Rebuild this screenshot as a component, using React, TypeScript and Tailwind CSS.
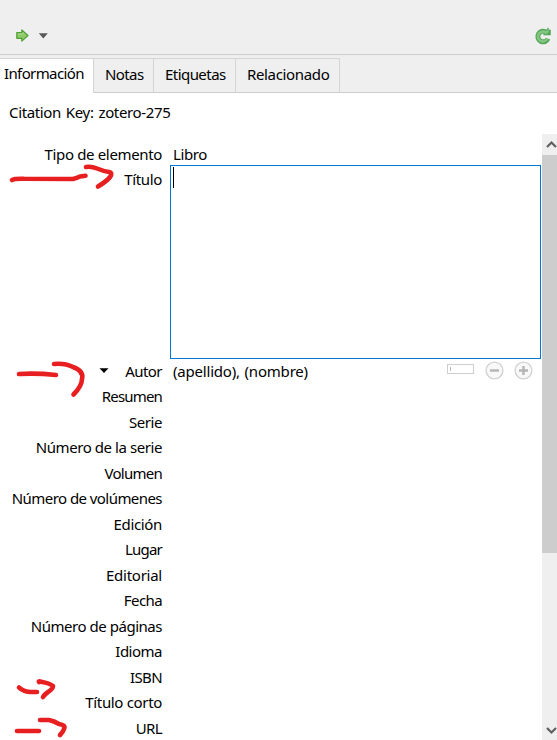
import React from "react";

const FIELDS: [string, string][] = [
  ["Resumen", "tracking-[-0.83px]"],
  ["Serie", "tracking-[-0.45px]"],
  ["Número de la serie", "tracking-[-0.43px]"],
  ["Volumen", "tracking-[-0.73px]"],
  ["Número de volúmenes", "tracking-[-0.56px]"],
  ["Edición", "tracking-[-0.35px]"],
  ["Lugar", "tracking-[-0.8px]"],
  ["Editorial", "tracking-[-0.25px]"],
  ["Fecha", "tracking-[-0.6px]"],
  ["Número de páginas", "tracking-[-0.47px]"],
  ["Idioma", "tracking-[-0.5px]"],
  ["ISBN", "tracking-[-0.6px]"],
  ["Título corto", "tracking-[-0.33px]"],
  ["URL", "tracking-[-0.65px]"],
];

function Toolbar() {
  return (
    <header className="flex h-[55px] shrink-0 items-start justify-between border-b border-[#cdcdcd] pt-[26px]">
      <div className="flex items-start pl-4">
        <svg width="14" height="18" viewBox="0 0 14 18">
          <path d="M.8 6.7h5V3.9l6.2 5.6-6.2 5.6v-2.8h-5z" fill="#8fca68" stroke="#4f9f33" strokeWidth="1.2" strokeLinejoin="round" />
          <path d="M2 8h5V6.6" fill="none" stroke="#b0d69a" />
        </svg>
        <svg width="10" height="6" viewBox="0 0 10 6" className="ml-[8px] mt-[7px]">
          <path d="M.8.2h9L5.3 5.5z" fill="#585858" />
        </svg>
      </div>
      <svg width="18" height="20" viewBox="0 0 18 20" className="mr-[5px]">
        <path d="M14 12.6A5.3 5.3 0 1 1 12.3 6.3" fill="none" stroke="#56a75a" strokeWidth="5" />
        <path d="M9.6 8.9l4.6-7.1v2.4l2.2-.3v5z" fill="#56a75a" stroke="#56a75a" strokeLinejoin="round" strokeWidth=".7" />
        <path d="M13.3 12.5A4.9 4.9 0 1 1 11.9 6.7L14.3 5" fill="none" stroke="#83c681" strokeWidth="2.5" />
      </svg>
    </header>
  );
}

function Tabs() {
  return (
    <nav className="flex h-[38px] shrink-0 items-stretch border-b border-[#cdcdcd] pt-[3px]">
      <div className="-mb-px w-[94px] border-r border-t border-[#d5d5d5] bg-white pl-1 pt-[4px] tracking-[-0.62px]">Información</div>
      <div className="w-[60px] border-r border-t border-[#d5d5d5] pl-[11px] pt-[5px] tracking-[-0.6px]">Notas</div>
      <div className="w-[82px] border-r border-t border-[#d5d5d5] pl-[11px] pt-[5px] tracking-[-0.55px]">Etiquetas</div>
      <div className="w-[104px] border-r border-t border-[#d5d5d5] pl-[11px] pt-[5px] tracking-[-0.35px]">Relacionado</div>
    </nav>
  );
}

function RoundButton({ plus = false }: { plus?: boolean }) {
  return (
    <svg width="19" height="19" viewBox="0 0 19 19">
      <circle cx="9.5" cy="9.5" r="8.4" fill="#f8f8f8" stroke="#d2d2d2" strokeWidth="1.3" />
      <path d={plus ? "M5 9.5h9M9.5 5v9" : "M5 9.5h9"} stroke="#b5b5b5" strokeWidth="2.4" />
    </svg>
  );
}

function Annotations() {
  return (
    <svg className="pointer-events-none absolute inset-0" width="557" height="740" fill="none" stroke="#e71f20" strokeWidth="4.6" strokeLinecap="round" strokeLinejoin="round">
      <path d="M12 180Q15 178.5 24 178.8L73 179Q77 178 80 176.5L85.5 175.8" />
      <path d="M86 167Q91 166 97 168.5Q103 171 109 172Q113 173 110 177Q107 181 98 186.5" />
      <path d="M19 374Q37 373 56 375" />
      <path d="M54 364Q65 363 73 367Q84 371 82 379Q82 386 73.5 394.5" />
      <path d="M19 687.5Q24 692 31 692L37 692" />
      <path d="M39 682Q38 680.5 42 682Q49 683 53 686Q53 689 48 692Q45 694 43 697" />
      <path d="M17 731H39" />
      <path d="M40 720H49Q54 721 59 724Q66 725 64 729Q63 732 60 735" />
    </svg>
  );
}

export default function App() {
  return (
    <div className="relative flex h-[740px] w-[557px] flex-col overflow-hidden bg-[#efefef] font-['Noto_Sans','Open_Sans',sans-serif] text-[15px] leading-[20px] text-black">
      <Toolbar />
      <Tabs />
      <main className="flex min-h-0 flex-1 flex-col bg-white">
        <div className="h-[41px] shrink-0 pl-[9px] pt-[9px] tracking-[-0.35px] [word-spacing:1.3px]">Citation Key: zotero-275</div>
        <div className="flex min-h-0 flex-1">
          <section className="w-[542px] pt-[10px]">
            <div className="flex h-[21px]">
              <div className="w-[162px] text-right tracking-[-0.35px]">Tipo de elemento</div>
              <div className="pl-[11px] tracking-[-0.4px]">Libro</div>
            </div>
            <div className="flex h-[194px]">
              <div className="w-[162px] pt-[4px] text-right tracking-[-0.35px]">Título</div>
              <div className="ml-2 h-[194px] w-[371px] border border-[#0078d7] pl-[2px] pt-[1px]">
                <div className="h-[21px] w-px bg-black" />
              </div>
            </div>
            <div className="flex h-[27px] items-start pt-[2px]">
              <div className="flex w-[162px] items-start justify-end">
                <svg width="10" height="6" viewBox="0 0 10 6" className="mr-[16px] mt-[7px]">
                  <path d="M.5.2h9L5 5z" fill="#000" />
                </svg>
                <span className="tracking-[-0.55px]">Autor</span>
              </div>
              <div className="w-[285px] pl-[11px] tracking-[-0.2px] [word-spacing:1px]">(apellido), (nombre)</div>
              <div className="mt-[3px] h-[10px] w-[27px] border border-[#cfcfcf] p-[2px]">
                <div className="h-[4px] w-px bg-[#bcbcbc]" />
              </div>
              <div className="ml-[11px] flex gap-[10px]">
                <RoundButton />
                <RoundButton plus />
              </div>
            </div>
            {FIELDS.map(([label, tracking]) => (
              <div key={label} className={`h-[25.5px] w-[162px] whitespace-nowrap text-right ${tracking}`}>{label}</div>
            ))}
          </section>
          <aside className="flex w-[15px] flex-col bg-[#efefef]">
            <svg width="15" height="21" viewBox="0 0 15 21">
              <path d="M5 13l4.5-4.5L14 13" fill="none" stroke="#606060" strokeWidth="2.2" />
            </svg>
            <div className="h-[398px] bg-[#cdcdcd]" />
            <svg width="15" height="21" viewBox="0 0 15 21" className="mt-auto">
              <path d="M5 9l4.5 4.5L14 9" fill="none" stroke="#606060" strokeWidth="2.2" />
            </svg>
          </aside>
        </div>
      </main>
      <Annotations />
    </div>
  );
}
